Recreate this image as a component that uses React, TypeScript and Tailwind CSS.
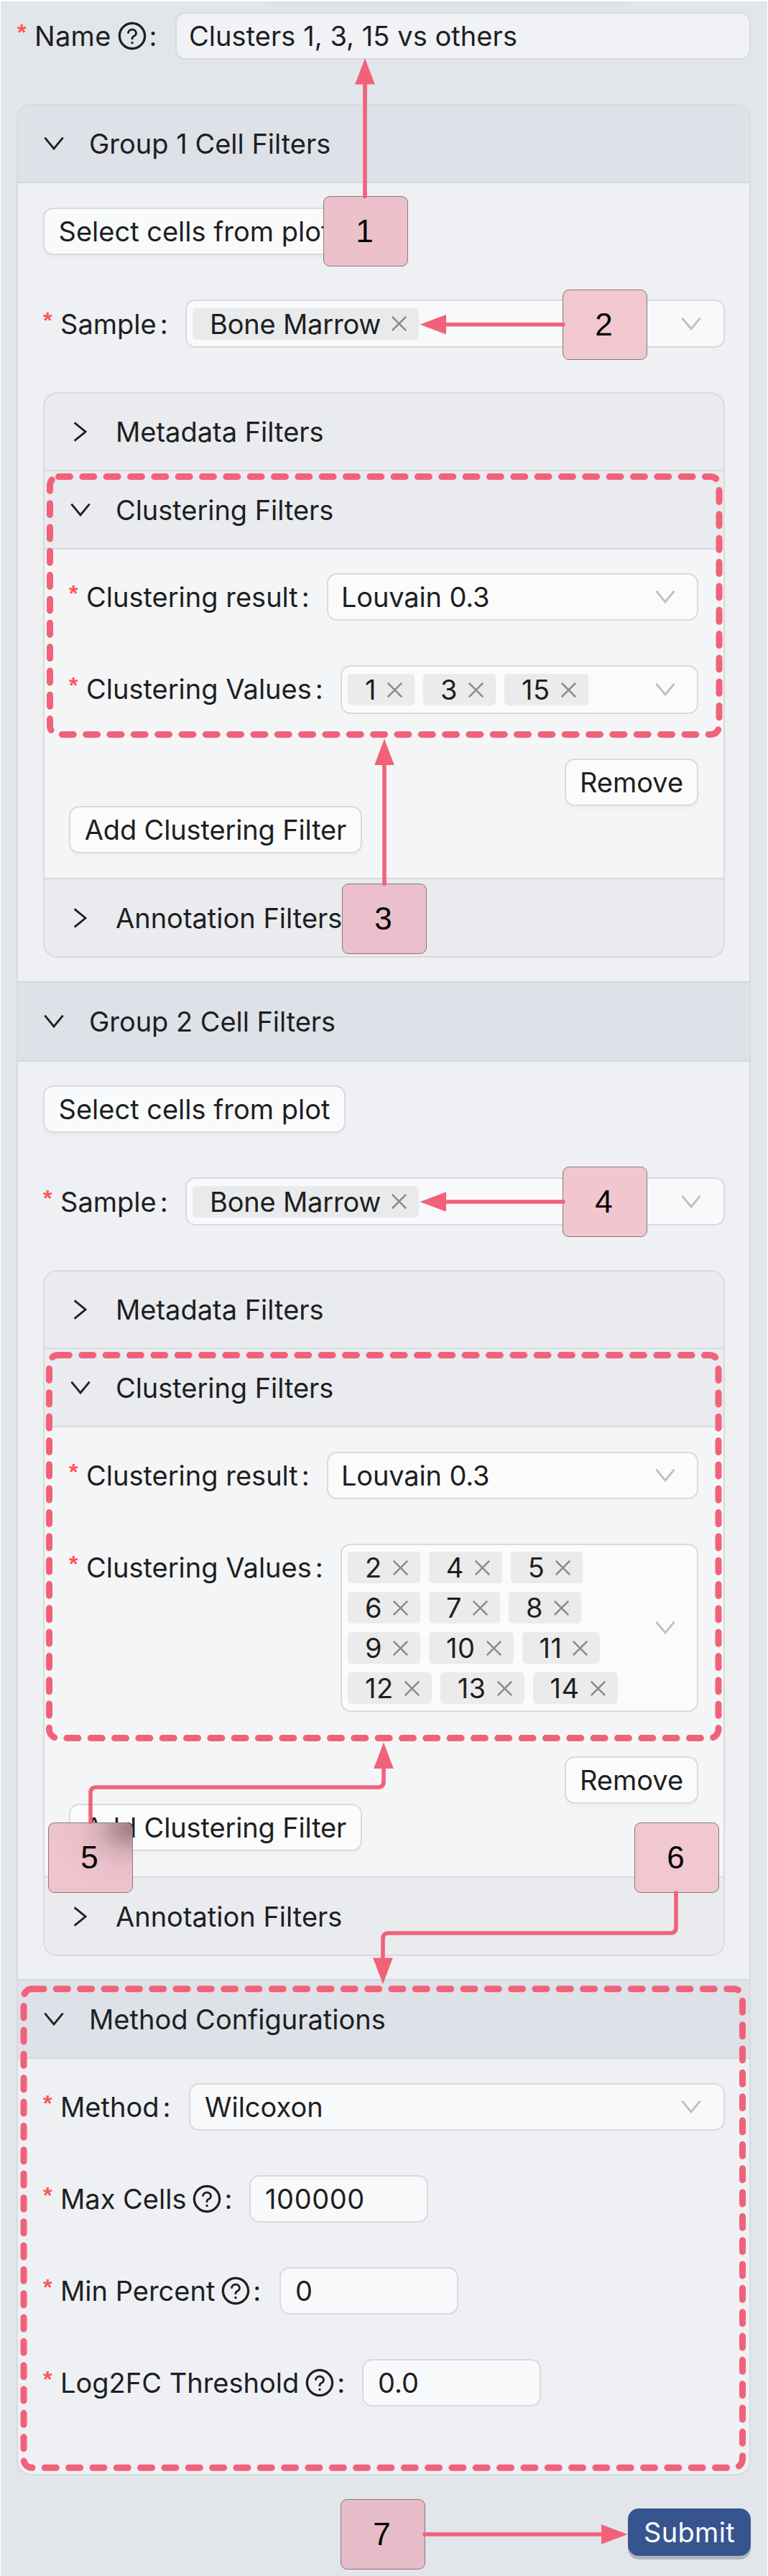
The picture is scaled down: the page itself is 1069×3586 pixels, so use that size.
import type { ReactNode } from "react";
import { AiOutlineQuestionCircle } from "react-icons/ai";

function Chevron({ className, right = false }: { className: string; right?: boolean }) {
  return (
    <svg
      viewBox="0 0 28 18"
      className={`h-[18px] w-[28px] shrink-0 ${right ? "-rotate-90" : ""} ${className}`}
      fill="none"
      stroke="currentColor"
      strokeWidth="2.8"
    >
      <path d="M1.4 0.6 L14 16 L26.6 0.6" />
    </svg>
  );
}

function Label({
  text,
  help = false,
  className = "",
}: {
  text: string;
  help?: boolean;
  className?: string;
}) {
  return (
    <div className={`flex h-[66px] shrink-0 items-center whitespace-nowrap ${className}`}>
      <span className="w-[24px] shrink-0 pb-[10px] font-['Liberation_Sans'] text-[32px] font-bold leading-[50px] text-[#ff5654]">
        *
      </span>
      <span>{text}</span>
      {help && <AiOutlineQuestionCircle className="ml-[7px] size-[44px] shrink-0" />}
      <span className={help ? "ml-[2px]" : "ml-[5px]"}>:</span>
    </div>
  );
}

function Field({ children, className }: { children: ReactNode; className: string }) {
  return (
    <div
      className={`flex items-center rounded-[14px] border-2 border-[#d8dadc] whitespace-nowrap ${className}`}
    >
      {children}
    </div>
  );
}

function Tag({ text, className = "bg-[#ebebeb] tracking-[0.5px]" }: { text: string; className?: string }) {
  return (
    <span
      className={`flex h-[44px] items-center rounded-[5px] pl-[24px] pr-[17px] ${className}`}
    >
      {text}
      <svg
        viewBox="0 0 21 21"
        className="ml-[15px] size-[21px] shrink-0 text-[#8a8a8a]"
        stroke="currentColor"
        strokeWidth="2.5"
      >
        <path d="M0.8 0.8 L20.2 20.2 M20.2 0.8 L0.8 20.2" />
      </svg>
    </span>
  );
}

function Button({ text, className }: { text: string; className: string }) {
  return (
    <button
      className={`flex h-[66px] items-center justify-center rounded-[14px] border-2 border-[#d8dadc] whitespace-nowrap shadow-[0_5px_1px_rgba(0,0,0,0.018)] ${className}`}
    >
      {text}
    </button>
  );
}

function GroupHeader({ text, className }: { text: string; className: string }) {
  return (
    <div
      className={`flex items-center border-b-2 border-[#d5d8dc] bg-[#dee1e8] pl-[36px] ${className}`}
    >
      <Chevron className="text-[#1d1f22]" />
      <span className="ml-[35px]">{text}</span>
    </div>
  );
}

function FilterHeader({
  text,
  right = false,
  className,
}: {
  text: string;
  right?: boolean;
  className: string;
}) {
  return (
    <div className={`flex items-center border-[#d8dadc] bg-[#e9ebee] pl-[36px] ${className}`}>
      <Chevron right={right} className="text-[#1d1f22]" />
      <span className="ml-[35px]">{text}</span>
    </div>
  );
}

function CellFilters({
  bodyClass,
  clusterClass,
  valuesClass,
  removeClass,
  rows,
}: {
  bodyClass: string;
  clusterClass: string;
  valuesClass: string;
  removeClass: string;
  rows: string[][];
}) {
  return (
    <div className={`pl-[35px] pr-[34px] ${bodyClass}`}>
      <Button text="Select cells from plot" className="w-[421px] bg-[#f9fafb]" />
      <div className="mt-[62px] flex h-[67px] items-center justify-between">
        <Label text="Sample" />
        <Field className="h-[67px] w-[751px] justify-between bg-[#f8f9fb] pl-[8px] pr-[31px]">
          <Tag text="Bone Marrow" className="bg-[#e9eaeb] tracking-[-0.2px]" />
          <Chevron className="text-[#bfc0c2]" />
        </Field>
      </div>
      <div className="mt-[62px] w-[949px] overflow-hidden rounded-[20px] border-2 border-[#d8dadc]">
        <FilterHeader text="Metadata Filters" right className="h-[108px] border-b-2" />
        <FilterHeader
          text="Clustering Filters"
          className="h-[109px] border-b-2 tracking-[-0.05px]"
        />
        <div className={`flex flex-col bg-[#f4f5f6] pl-[34px] pr-[35px] ${clusterClass}`}>
          <div className="flex h-[66px] items-center justify-between">
            <Label text="Clustering result" />
            <Field className="h-[66px] w-[517px] justify-between bg-[#fbfbfb] pl-[18px] pr-[30px]">
              <span className="tracking-[-0.15px]">Louvain 0.3</span>
              <Chevron className="text-[#bfbfbf]" />
            </Field>
          </div>
          <div className="mt-[62px] flex items-start justify-between">
            <Label text="Clustering Values" />
            <Field
              className={`w-[498px] justify-between bg-[#fbfbfb] pl-[8px] pr-[30px] ${valuesClass}`}
            >
              <div className="flex flex-col gap-[12px]">
                {rows.map((row) => (
                  <div key={row[0]} className="flex gap-[12px]">
                    {row.map((v) => (
                      <Tag key={v} text={v} />
                    ))}
                  </div>
                ))}
              </div>
              <Chevron className="text-[#bfbfbf]" />
            </Field>
          </div>
          <Button text="Remove" className={`w-[186px] self-end bg-[#fbfbfb] ${removeClass}`} />
          <Button
            text="Add Clustering Filter"
            className="w-[408px] bg-[#fbfbfb] tracking-[-0.15px]"
          />
        </div>
        <FilterHeader text="Annotation Filters" right className="h-[109px] border-t-2" />
      </div>
    </div>
  );
}

function Callout({ n, className }: { n: number; className: string }) {
  return (
    <div
      className={`absolute flex h-[98px] w-[118px] items-center justify-center rounded-[9px] border-[1.5px] border-[#85797c] pr-[3px] font-['Liberation_Sans'] text-[44px] font-normal leading-none text-black ${className}`}
    >
      {n}
    </div>
  );
}

function Annotations() {
  return (
    <>
      <Callout n={1} className="left-[450px] top-[273px] bg-[#ecc1cc]" />
      <Callout n={2} className="left-[783px] top-[403px] bg-[#f1c7d0]" />
      <Callout n={3} className="left-[476px] top-[1230px] bg-[#ebc0cc]" />
      <Callout n={4} className="left-[783px] top-[1624px] bg-[#f1c6cf]" />
      <Callout
        n={5}
        className="left-[67px] top-[2537px] bg-[radial-gradient(ellipse_at_96%_8%,#a27e86_0%,#b8929b_12%,#d8b0ba_27%,#e9bfc9_44%,#efc4cf_70%)]"
      />
      <Callout n={6} className="left-[883px] top-[2537px] bg-[#f1c7d0]" />
      <Callout n={7} className="left-[474px] top-[3479px] bg-[#e7bcc9]" />
      <svg
        viewBox="0 0 1069 3586"
        className="pointer-events-none absolute left-0 top-0 h-[3586px] w-[1069px]"
        fill="none"
        stroke="#f1627a"
      >
        <g strokeWidth="9" strokeLinecap="round" strokeDasharray="16 17.33">
          <rect x="69.5" y="663.6" width="931.5" height="358.8" rx="12" />
          <rect x="68.5" y="1886.6" width="931.5" height="533" rx="12" />
          <rect x="33" y="2768.7" width="1000.5" height="666.6" rx="12" />
        </g>
        <g strokeWidth="5.6" strokeLinecap="round">
          <path d="M508 273.500 V115" />
          <path d="M784 451.800 H618" />
          <path d="M535 1230.500 V1062" />
          <path d="M784 1673 H618" />
          <path d="M126 2536.500 V2496 Q126 2488 134 2488 H526 Q534 2488 534 2480 V2460" />
          <path d="M941 2635 V2683 Q941 2691 933 2691 H541 Q533 2691 533 2699 V2728" />
          <path d="M591 3528 H840" />
        </g>
        <g fill="#f1627a" stroke="none">
          <path d="M508 81 L521.800 117.500 H494.200 Z" />
          <path d="M584.500 451.800 L621 438 V465.600 Z" />
          <path d="M535 1028.500 L548.800 1065 H521.200 Z" />
          <path d="M584.500 1673 L621 1659.200 V1686.800 Z" />
          <path d="M534 2425.500 L547.800 2462 H520.200 Z" />
          <path d="M533 2762 L546.800 2725.500 H519.200 Z" />
          <path d="M873.500 3528 L837 3514.200 V3541.800 Z" />
        </g>
      </svg>
    </>
  );
}

const parameters = [
  { label: "Max Cells", value: "100000", width: "w-[287px]", tracking: "tracking-[0.6px]" },
  { label: "Min Percent", value: "0", width: "w-[329px]", tracking: "" },
  { label: "Log2FC Threshold", value: "0.0", width: "w-[444px]", tracking: "" },
];

export default function App() {
  return (
    <div className="relative h-[3586px] w-[1069px] overflow-hidden border-x border-t-2 border-white bg-[#e2e5ea] pl-[22px] pr-[23px] pt-[15px] font-['Inter',sans-serif] text-[38px] font-[430] leading-[46px] text-[#1d1f22]">
      <div className="absolute left-[375px] top-0 h-[8px] w-[496px] rounded-b-[8px] bg-[#dee1e6]" />

      <div className="flex h-[66px] w-[1022px] items-center justify-between">
        <Label text="Name" help className="ml-px tracking-[0.3px]" />
        <Field className="h-[66px] w-[801px] bg-[#f1f2f6] pl-[17px] tracking-[0.05px]">
          Clusters 1, 3, 15 vs others
        </Field>
      </div>

      <div className="mt-[62px] h-[3301px] w-[1022px] overflow-hidden rounded-[20px] border-2 border-[#d7dade] bg-[#eef0f3]">
        <GroupHeader text="Group 1 Cell Filters" className="h-[108px]" />
        <CellFilters
          bodyClass="h-[1111px] pt-[34px]"
          clusterClass="h-[457px] pt-[33px]"
          valuesClass="h-[68px]"
          removeClass="mt-[62px]"
          rows={[["1", "3", "15"]]}
        />

        <GroupHeader
          text="Group 2 Cell Filters"
          className="h-[112px] border-t-2 tracking-[-0.05px]"
        />
        <CellFilters
          bodyClass="h-[1277px] pt-[33px]"
          clusterClass="h-[625px] pt-[34px]"
          valuesClass="h-[234px]"
          removeClass="mt-[62px]"
          rows={[
            ["2", "4", "5"],
            ["6", "7", "8"],
            ["9", "10", "11"],
            ["12", "13", "14"],
          ]}
        />

        <GroupHeader text="Method Configurations" className="h-[111px] border-t-2" />
        <div className="flex flex-col gap-[62px] pl-[35px] pr-[34px] pt-[34px]">
          <div className="flex h-[66px] items-center justify-between">
            <Label text="Method" />
            <Field className="h-[66px] w-[746px] justify-between bg-[#f8f9fb] pl-[20px] pr-[31px]">
              <span>Wilcoxon</span>
              <Chevron className="text-[#bfc0c2]" />
            </Field>
          </div>
          {parameters.map((p) => (
            <div key={p.label} className="flex h-[66px] items-center">
              <Label text={p.label} help className={p.width} />
              <Field className={`h-[66px] w-[249px] bg-[#f8f9fb] pl-[20px] ${p.tracking}`}>
                {p.value}
              </Field>
            </div>
          ))}
        </div>
      </div>

      <button className="ml-[851px] mt-[46px] flex h-[66px] w-[171px] items-center justify-center rounded-[15px] bg-[#36558f] tracking-[0.3px] text-white shadow-[0_5px_0_#afb5c0]">
        Submit
      </button>

      <div className="absolute -left-px -top-[2px]">
        <Annotations />
      </div>
    </div>
  );
}
